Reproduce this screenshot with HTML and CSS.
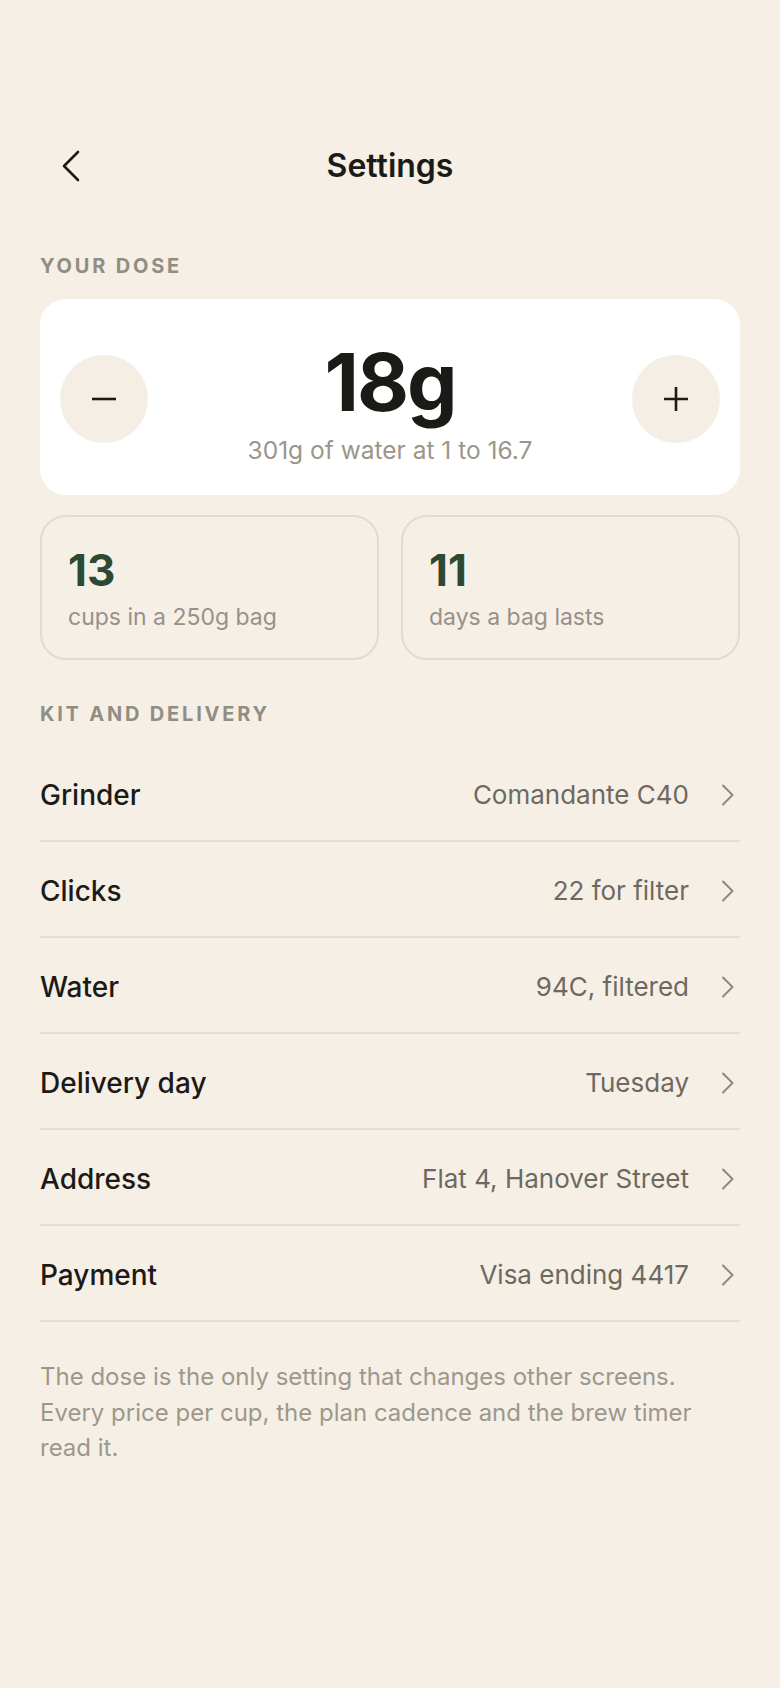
FILE: index.html
```html
<!DOCTYPE html>
<html>

<head>
    <title>Settings</title>
    <link rel="stylesheet" href="styles.css">
</head>

<body>
    <div class="screen">
        <header class="topbar">
            <button class="back" aria-label="Back">
                <svg width="24" height="36" viewBox="0 0 24 36">
                    <path d="M19 4 L5 18 L19 32" fill="none" stroke="#1c1a17" stroke-width="2.6" stroke-linecap="round" stroke-linejoin="round" />
                </svg>
            </button>
            <h1>Settings</h1>
            <span></span>
        </header>

        <h2 class="section-label first">Your dose</h2>

        <div class="dose-card">
            <button class="round-btn" aria-label="Less">
                <svg width="26" height="26" viewBox="0 0 26 26">
                    <path d="M1 13 H25" stroke="#1c1a17" stroke-width="2.6" />
                </svg>
            </button>
            <div class="dose-main">
                <div class="dose-value">18g</div>
                <div class="dose-sub">301g of water at 1 to 16.7</div>
            </div>
            <button class="round-btn" aria-label="More">
                <svg width="26" height="26" viewBox="0 0 26 26">
                    <path d="M1 13 H25 M13 1 V25" stroke="#1c1a17" stroke-width="2.6" />
                </svg>
            </button>
        </div>

        <div class="stats">
            <div class="stat">
                <div class="stat-num">13</div>
                <div class="stat-label">cups in a 250g bag</div>
            </div>
            <div class="stat">
                <div class="stat-num">11</div>
                <div class="stat-label">days a bag lasts</div>
            </div>
        </div>

        <h2 class="section-label">Kit and delivery</h2>

        <ul class="rows">
            <li class="row"><span class="row-name">Grinder</span><span class="row-value">Comandante C40</span>
                <svg class="chev" width="24" height="24" viewBox="0 0 24 24"><path d="M7 2.5 L16.5 12 L7 21.5" /></svg></li>
            <li class="row"><span class="row-name">Clicks</span><span class="row-value">22 for filter</span>
                <svg class="chev" width="24" height="24" viewBox="0 0 24 24"><path d="M7 2.5 L16.5 12 L7 21.5" /></svg></li>
            <li class="row"><span class="row-name">Water</span><span class="row-value">94C, filtered</span>
                <svg class="chev" width="24" height="24" viewBox="0 0 24 24"><path d="M7 2.5 L16.5 12 L7 21.5" /></svg></li>
            <li class="row"><span class="row-name">Delivery day</span><span class="row-value">Tuesday</span>
                <svg class="chev" width="24" height="24" viewBox="0 0 24 24"><path d="M7 2.5 L16.5 12 L7 21.5" /></svg></li>
            <li class="row"><span class="row-name">Address</span><span class="row-value">Flat 4, Hanover Street</span>
                <svg class="chev" width="24" height="24" viewBox="0 0 24 24"><path d="M7 2.5 L16.5 12 L7 21.5" /></svg></li>
            <li class="row"><span class="row-name">Payment</span><span class="row-value">Visa ending 4417</span>
                <svg class="chev" width="24" height="24" viewBox="0 0 24 24"><path d="M7 2.5 L16.5 12 L7 21.5" /></svg></li>
        </ul>

        <p class="note">The dose is the only setting that changes other screens. Every price per cup, the plan cadence and the brew timer read it.</p>
    </div>
</body>

</html>
```

FILE: styles.css
```css
* {
    box-sizing: border-box;
}

body {
    margin: 0;
    background-color: #f5efe6;
    font-family: Inter, "Noto Sans", sans-serif;
    color: #1c1a17;
}

.screen {
    padding: 142px 40px 60px;
}

button {
    border: none;
    background: none;
    padding: 0;
    cursor: pointer;
}

/* top bar */
.topbar {
    display: grid;
    grid-template-columns: 1fr auto 1fr;
    align-items: center;
    height: 48px;
}

.back {
    justify-self: start;
    margin-left: 19px;
    display: flex;
}

.topbar h1 {
    margin: 0;
    font-size: 32px;
    font-weight: 600;
    line-height: 48px;
}

.section-label {
    margin: 42px 0 20px;
    font-size: 20px;
    line-height: 24px;
    font-weight: 700;
    letter-spacing: 0.14em;
    text-transform: uppercase;
    color: #918d83;
}

.section-label.first {
    margin-top: 64px;
    margin-bottom: 21px;
}

/* dose card */
.dose-card {
    display: flex;
    align-items: center;
    justify-content: space-between;
    background-color: #fff;
    border-radius: 26px;
    padding: 39px 20px 31px;
}

.round-btn {
    width: 88px;
    height: 88px;
    margin-bottom: 4px;
    border-radius: 50%;
    background-color: #f4eee4;
    display: flex;
    align-items: center;
    justify-content: center;
}

.dose-main {
    text-align: center;
}

.dose-value {
    font-size: 80px;
    line-height: 88px;
    font-weight: 700;
    letter-spacing: -2px;
}

.dose-sub {
    margin-top: 10px;
    font-size: 24.5px;
    line-height: 28px;
    color: #9b968b;
}

/* stats */
.stats {
    display: grid;
    grid-template-columns: 1fr 1fr;
    gap: 22px;
    margin-top: 20px;
}

.stat {
    border: 2px solid #e3dbcb;
    border-radius: 26px;
    padding: 29px 26px 26px;
}

.stat-num {
    font-size: 44px;
    line-height: 48px;
    font-weight: 700;
    color: #2d4934;
}

.stat-label {
    margin-top: 9px;
    font-size: 23px;
    line-height: 29px;
    color: #96918a;
}

/* list */
.rows {
    list-style: none;
    margin: 0;
    padding: 0;
}

.row {
    display: flex;
    align-items: center;
    padding: 34px 0 30px;
    border-bottom: 2px solid #e5ddce;
    line-height: 30px;
    font-size: 26px;
}

.row-name {
    flex: 1;
    font-size: 28px;
    font-weight: 500;
    color: #1c1a17;
}

.row-value {
    color: #6e695f;
    margin-right: 27px;
}

.chev path {
    fill: none;
    stroke: #8d887e;
    stroke-width: 2;
    stroke-linecap: round;
    stroke-linejoin: round;
}

.note {
    margin: 37px 0 0;
    font-size: 24px;
    line-height: 35.5px;
    color: #9d988c;
}
```
